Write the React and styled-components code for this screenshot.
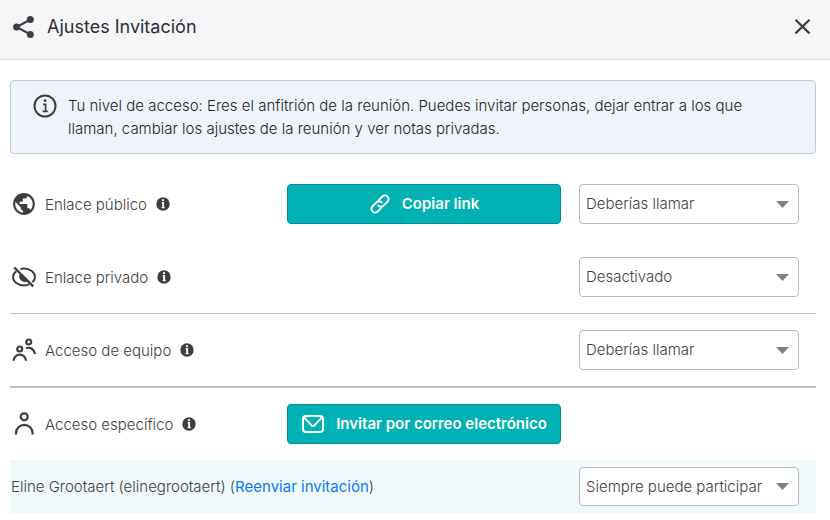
import React from "react";
import styled, { createGlobalStyle } from "styled-components";

const GlobalStyle = createGlobalStyle`
  *, *::before, *::after { box-sizing: border-box; }
  body {
    margin: 0;
    background: #fff;
    color: #3d3e42;
    font-family: Inter, "Liberation Sans", sans-serif;
    font-size: 15px;
    font-weight: 350;
    line-height: 23px;
  }
`;

const Header = styled.header`
  display: flex;
  align-items: center;
  gap: 11px;
  height: 60px;
  padding: 0 16px 6px 12px;
  background: #f6f6f8;
  border-bottom: 1px solid #dddfe2;
`;

const Title = styled.h1`
  flex: 1;
  margin: 0;
  color: #2d2e33;
  font-size: 18px;
  font-weight: 400;
  line-height: 24px;
`;

const CloseButton = styled.button`
  display: flex;
  padding: 0;
  border: 0;
  background: none;
  color: #3d3e42;
  cursor: pointer;
`;

const Content = styled.main`
  padding: 20px 14px 0 10px;
`;

const Notice = styled.section`
  display: flex;
  align-items: flex-start;
  gap: 11px;
  margin-bottom: 14px;
  padding: 13px 22px;
  background: #eff4fc;
  border: 1px solid #b9cbe2;
  border-radius: 4px;
  color: #222327;
`;

const NoticeText = styled.p`
  flex: 1;
  margin: 0;
`;

const SettingRow = styled.div`
  display: grid;
  grid-template-columns: minmax(0, 1fr) 274px 220px;
  column-gap: 18px;
  align-items: center;
  padding: 16px 17px 16px 2px;
  border-bottom: ${({ $line = 1 }) => $line}px solid ${({ $color = "transparent" }) => $color};
`;

const RowLabel = styled.div`
  display: flex;
  align-items: center;
  gap: 9px;
  white-space: nowrap;
`;

const InfoButton = styled.button`
  display: flex;
  padding: 0;
  border: 0;
  background: none;
  color: #3d3e42;
  cursor: pointer;
`;

const ActionButton = styled.button`
  grid-column: 2;
  display: flex;
  align-items: center;
  justify-content: center;
  gap: 11px;
  height: 40px;
  padding: 0;
  background: #00b2b3;
  border: 1px solid #078d90;
  border-radius: 4px;
  color: #fff;
  font: 600 15px/24px Inter, "Liberation Sans", sans-serif;
  white-space: nowrap;
  cursor: pointer;
`;

const SelectBox = styled.div`
  grid-column: 3;
  display: grid;
  align-items: center;

  > * { grid-area: 1 / 1; }
  > svg { justify-self: end; margin-right: 10px; pointer-events: none; }
`;

const Select = styled.select`
  appearance: none;
  width: 100%;
  height: 40px;
  padding: 0 28px 0 6px;
  background: #fff;
  border: 1px solid #b9babf;
  border-radius: 4px;
  color: #3d3e42;
  font: 350 15px/24px Inter, "Liberation Sans", sans-serif;
`;

const GuestRow = styled.div`
  display: grid;
  grid-template-columns: minmax(0, 1fr) 220px;
  column-gap: 18px;
  align-items: center;
  padding: 7px 17px 7px 1px;
  background: #eff9fb;

  ${SelectBox} { grid-column: 2; }
  ${Select} { height: 39px; }
`;

const ResendLink = styled.a`
  color: #0b7bf5;
  font-weight: 400;
  text-decoration: none;
`;

function Icon({ size = 24, children, ...rest }) {
  return (
    <svg width={size} height={size} viewBox="0 0 24 24" fill="none" stroke="currentColor" strokeWidth="2" aria-hidden="true" {...rest}>
      {children}
    </svg>
  );
}

const ShareIcon = () => (
  <Icon>
    <path d="M18.5 4.5 4.5 12l14 7.5" />
    <g fill="currentColor" stroke="none">
      <circle cx="18.3" cy="4.6" r="3.5" />
      <circle cx="4.6" cy="12" r="3.5" />
      <circle cx="18.3" cy="19.4" r="3.5" />
    </g>
  </Icon>
);

const CloseIcon = () => (
  <Icon>
    <path d="m5.5 4.8 14 13.6M19.5 4.8 5.5 18.4" strokeWidth="2.2" />
  </Icon>
);

const InfoOutlineIcon = () => (
  <Icon color="#3d3e42">
    <circle cx="12" cy="12" r="10.5" />
    <path d="M10 10.4h2.6v6.5M9.6 17.4h5.2" strokeWidth="1.7" />
    <circle cx="12.1" cy="6.7" r="1.4" fill="currentColor" stroke="none" />
  </Icon>
);

const InfoIcon = () => (
  <Icon size={14}>
    <circle cx="12" cy="12" r="11.5" fill="currentColor" stroke="none" />
    <path d="M9.5 9.8h3v8.5M9.5 18.3h5.5" stroke="#fff" />
    <path d="M12.3 9v9" stroke="#fff" strokeWidth="3.2" />
    <circle cx="12" cy="5.5" r="1.9" fill="#fff" stroke="none" />
  </Icon>
);

const GlobeIcon = () => (
  <Icon viewBox="1 1 22 22" fill="currentColor" stroke="none">
    <path d="M12 2C6.48 2 2 6.48 2 12s4.48 10 10 10 10-4.48 10-10S17.52 2 12 2zm-1 17.93c-3.95-.49-7-3.85-7-7.93 0-.62.08-1.21.21-1.79L9 15v1c0 1.1.9 2 2 2v1.93zm6.9-2.54c-.26-.81-1-1.39-1.9-1.39h-1v-3c0-.55-.45-1-1-1H8v-2h2c.55 0 1-.45 1-1V7h2c1.1 0 2-.9 2-2v-.41c2.93 1.19 5 4.06 5 7.41 0 2.08-.8 3.97-2.1 5.39z" />
  </Icon>
);

const HiddenIcon = () => (
  <Icon>
    <path d="M8.5 4.200c1.100-.4 2.300-.6 3.500-.6 5.800 0 11 3.800 11 8.400 0 2-1 3.800-2.600 5.200M4.300 6.300C2.300 7.800 1 9.800 1 12c0 4.600 5.200 8.400 11 8.400 1.900 0 3.700-.4 5.200-1" />
    <path d="M8 8.700A5.500 5.500 0 0 0 15.500 16.200Z" fill="currentColor" stroke="none" />
    <path d="M2.300 2.500 21.200 21.400" strokeWidth="2.400" />
  </Icon>
);

const TeamIcon = () => (
  <Icon strokeWidth="2.2">
    <circle cx="7.7" cy="11" r="2.5" />
    <path d="M1.600 22.800a6.200 6.200 0 0 1 12.400 0" />
    <circle cx="16.7" cy="4" r="2.500" />
    <path d="M14 10.200c4-1.500 8.500 1.100 9 6" />
  </Icon>
);

const PersonIcon = () => (
  <Icon strokeWidth="2.2">
    <circle cx="12.2" cy="4.8" r="3.5" />
    <path d="M4 22.500v-1.300a8.300 8.300 0 0 1 16.600 0v1.300" />
  </Icon>
);

const LinkIcon = () => (
  <Icon size={22} strokeLinecap="round" strokeWidth="2.2">
    <g transform="rotate(-45 12 12)">
      <path d="M10 16H4.500a4 4 0 0 1 0-8H10.500a4 4 0 0 1 4 4" />
      <path d="M14 8h5.500a4 4 0 0 1 0 8H13.500a4 4 0 0 1-4-4" />
    </g>
  </Icon>
);

const MailIcon = () => (
  <Icon strokeLinejoin="round">
    <rect x="2" y="4" width="20" height="16" rx="3" />
    <path d="m2.600 4.900 8 8.500q1.400 1.300 2.800 0l8-8.500" />
  </Icon>
);

const ArrowIcon = () => (
  <svg width="13" height="7" viewBox="0 0 13 7" fill="#7f808a" aria-hidden="true">
    <path d="M0 0h13L6.500 7Z" />
  </svg>
);

const accessOptions = ["Deberías llamar", "Desactivado", "Siempre puede participar"];

function AccessSelect({ label, value }) {
  return (
    <SelectBox>
      <Select aria-label={label} defaultValue={value}>
        {accessOptions.map((option) => (
          <option key={option}>{option}</option>
        ))}
      </Select>
      <ArrowIcon />
    </SelectBox>
  );
}

function Setting({ icon, label, line, color, children }) {
  return (
    <SettingRow $line={line} $color={color}>
      <RowLabel>
        {icon}
        <span>{label}</span>
        <InfoButton type="button" aria-label={`Información: ${label}`}>
          <InfoIcon />
        </InfoButton>
      </RowLabel>
      {children}
    </SettingRow>
  );
}

export default function App() {
  return (
    <>
      <GlobalStyle />
      <Header>
        <ShareIcon />
        <Title>Ajustes Invitación</Title>
        <CloseButton type="button" aria-label="Cerrar">
          <CloseIcon />
        </CloseButton>
      </Header>
      <Content>
        <Notice>
          <InfoOutlineIcon />
          <NoticeText>
            Tu nivel de acceso: Eres el anfitrión de la reunión. Puedes invitar personas, dejar entrar a los que
            llaman, cambiar los ajustes de la reunión y ver notas privadas.
          </NoticeText>
        </Notice>
        <Setting icon={<GlobeIcon />} label="Enlace público">
          <ActionButton type="button">
            <LinkIcon />
            Copiar link
          </ActionButton>
          <AccessSelect label="Enlace público" value="Deberías llamar" />
        </Setting>
        <Setting icon={<HiddenIcon />} label="Enlace privado" color="#bdbec2">
          <AccessSelect label="Enlace privado" value="Desactivado" />
        </Setting>
        <Setting icon={<TeamIcon />} label="Acceso de equipo" line={2} color="#bdbec2">
          <AccessSelect label="Acceso de equipo" value="Deberías llamar" />
        </Setting>
        <Setting icon={<PersonIcon />} label="Acceso específico" line={0}>
          <ActionButton type="button">
            <MailIcon />
            Invitar por correo electrónico
          </ActionButton>
        </Setting>
        <GuestRow>
          <span>
            Eline Grootaert (elinegrootaert) (<ResendLink href="#reenviar">Reenviar invitación</ResendLink>)
          </span>
          <AccessSelect label="Acceso de Eline Grootaert" value="Siempre puede participar" />
        </GuestRow>
      </Content>
    </>
  );
}
